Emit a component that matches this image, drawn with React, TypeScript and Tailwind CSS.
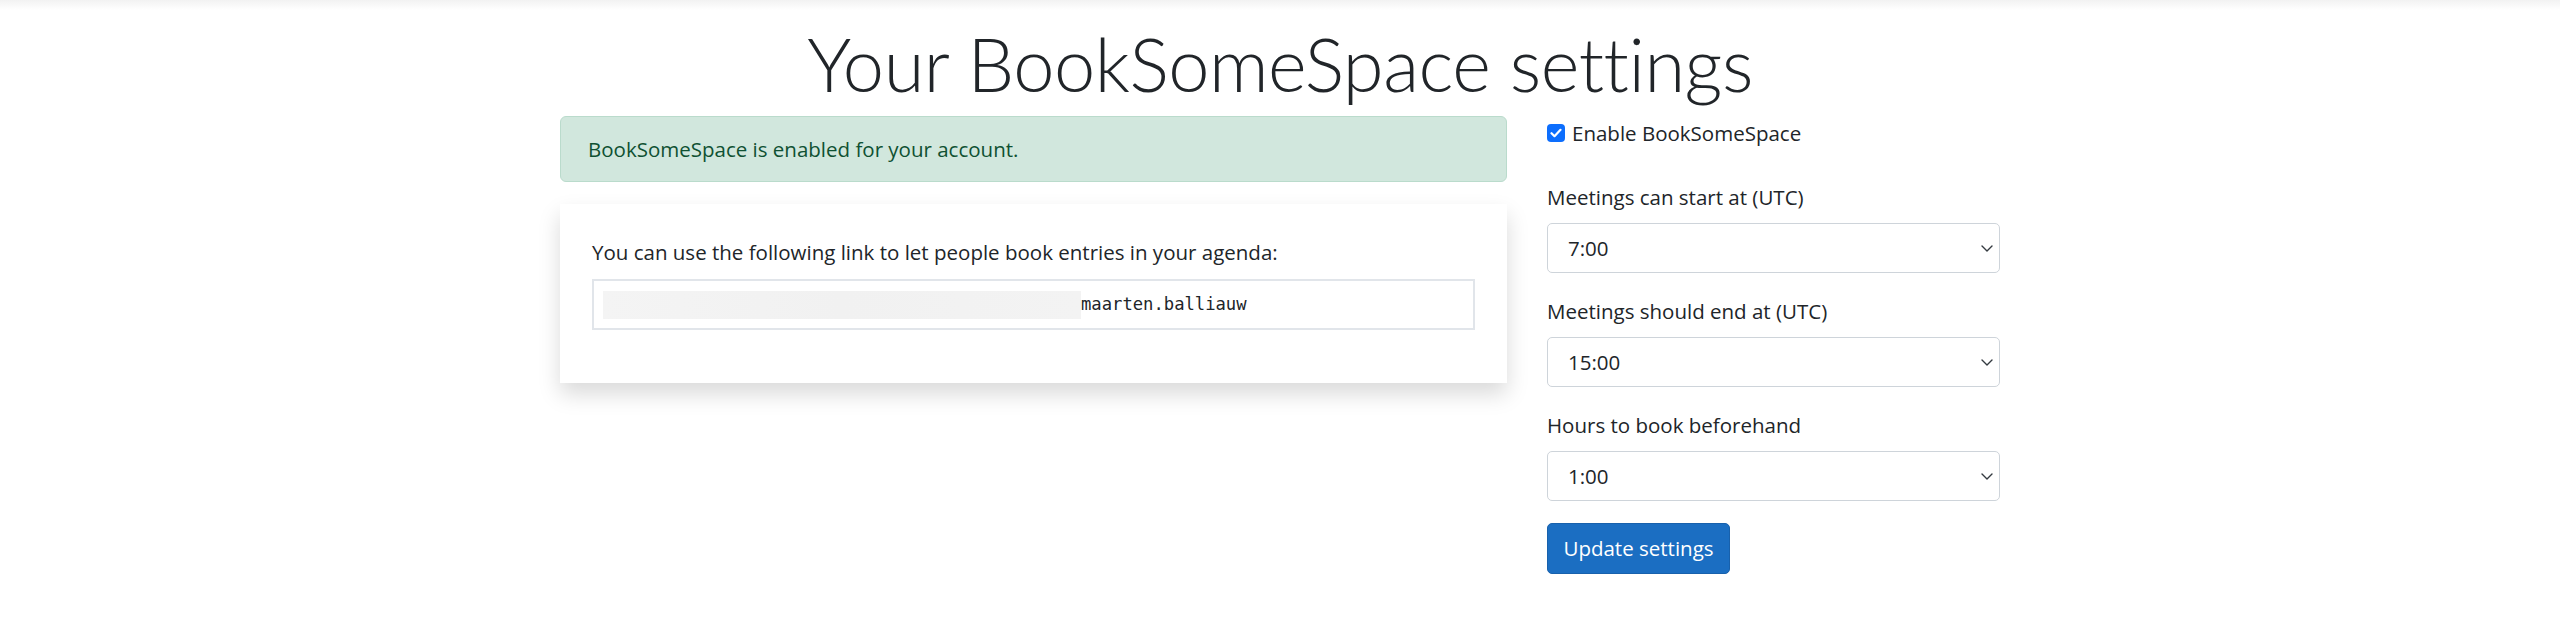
import React from "react";

const font = { fontFamily: '"Segoe UI", "Open Sans", "Noto Sans", Arial, sans-serif' };

function Chevron() {
  return (
    <svg width="12" height="7" viewBox="0 0 12 7" fill="none" className="shrink-0">
      <path d="M1 1l5 5 5-5" stroke="#343a40" strokeWidth="1.4" strokeLinecap="round" strokeLinejoin="round" />
    </svg>
  );
}

function SelectBox({ label, value }: { label: string; value: string }) {
  return (
    <div className="mb-[22px]">
      <div className="mb-[10px] text-[20.5px] leading-[32px]">{label}</div>
      <div className="flex h-[50px] items-center justify-between rounded-[5px] border border-[#ced4da] bg-white pl-[20px] pr-[6px] text-[20.5px]">
        <span>{value}</span>
        <Chevron />
      </div>
    </div>
  );
}

export default function App() {
  return (
    <div className="min-h-screen bg-white text-[#212529]" style={font}>
      <div className="h-[10px] bg-gradient-to-b from-[#f2f2f2] to-white" />

      <h1
        className="mt-[10px] h-[88px] text-center text-[74px] font-light leading-[88px] tracking-[-0.5px]"
        style={{ fontFamily: '"Segoe UI", Lato, "Open Sans", sans-serif' }}
      >
        Your BookSomeSpace settings
      </h1>

      <div className="mx-auto mt-[8px] grid w-[1440px] grid-cols-[947px_453px] gap-x-[40px]">
        <div>
          <div className="flex h-[66px] items-center rounded-[6px] border border-[#badbcc] bg-[#d1e7dd] pl-[27px] text-[20.5px] text-[#0f5132]">
            BookSomeSpace is enabled for your account.
          </div>

          <div className="mt-[22px] bg-white px-[32px] pt-[32px] pb-[53px] shadow-[0_11px_21px_rgba(0,0,0,0.15)]">
            <div className="text-[20.5px] leading-[32px]">
              You can use the following link to let people book entries in your agenda:
            </div>
            <div className="mt-[11px] flex h-[51px] items-center border-2 border-[#e1e5ea] pl-[9px]">
              <div className="h-[28px] w-[478px] bg-gradient-to-r from-[#f4f4f4] via-[#f1f1f1] to-[#f3f3f3]" />
              <span className="text-[17.2px]" style={{ fontFamily: '"DejaVu Sans Mono", "Liberation Mono", monospace' }}>
                maarten.balliauw
              </span>
            </div>
          </div>
        </div>

        <div>
          <label className="mb-[32px] mt-[1px] flex items-center gap-[7px] text-[20.5px] leading-[32px]">
            <span className="flex h-[18px] w-[18px] items-center justify-center rounded-[4px] bg-[#0d6efd]">
              <svg width="12" height="10" viewBox="0 0 12 10" fill="none">
                <path d="M1.5 5.2l3 3 6-6.4" stroke="white" strokeWidth="2.2" strokeLinecap="round" strokeLinejoin="round" />
              </svg>
            </span>
            Enable BookSomeSpace
          </label>

          <SelectBox label="Meetings can start at (UTC)" value="7:00" />
          <SelectBox label="Meetings should end at (UTC)" value="15:00" />
          <SelectBox label="Hours to book beforehand" value="1:00" />

          <button className="h-[51px] w-[183px] rounded-[5px] border border-[#1861ac] bg-[#1b6ec2] text-[20.5px] text-white">
            Update settings
          </button>
        </div>
      </div>
    </div>
  );
}
